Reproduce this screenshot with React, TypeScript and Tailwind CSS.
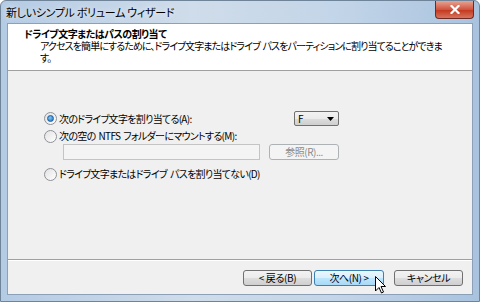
import React from "react";

const font = "font-['Noto_Sans_CJK_JP','Noto_Sans',sans-serif] [font-feature-settings:'palt']";

const Radio = ({ checked }: { checked?: boolean }) => (
  <span className="relative inline-flex h-[13px] w-[13px] shrink-0 items-center justify-center rounded-full border border-[#8f9196] bg-[linear-gradient(135deg,#e2e2e2,#ffffff)]">
    {checked && (
      <span className="h-[7px] w-[7px] rounded-full border border-[#1d5c9b] bg-[radial-gradient(circle_at_40%_35%,#7fc6f4,#1c6bb5)]" />
    )}
  </span>
);

const RadioRow = ({ checked, children }: { checked?: boolean; children: React.ReactNode }) => (
  <div className="flex h-[14px] items-center gap-[2px]">
    <Radio checked={checked} />
    <span className="whitespace-pre text-[10px] leading-[14px] tracking-[-0.7px] text-black">{children}</span>
  </div>
);

const Btn = ({ children, active }: { children: React.ReactNode; active?: boolean }) => (
  <div
    className={
      active
        ? "flex h-[16px] w-[70px] items-center justify-center whitespace-pre rounded-[3px] border border-[#3c7fb1] bg-[linear-gradient(#eaf6fd,#d9f0fc_50%,#bee6fd_51%,#a7d9f5)] text-[10px] leading-none tracking-[-0.4px] text-black"
        : "flex h-[16px] w-[69px] items-center justify-center whitespace-pre rounded-[3px] border border-[#707070] bg-[linear-gradient(#f2f2f2,#ebebeb_50%,#dddddd_51%,#cfcfcf)] text-[10px] leading-none tracking-[-0.4px] text-black"
    }
  >
    {children}
  </div>
);

const App = () => {
  return (
    <div className={`${font} relative flex h-[302px] w-[480px] flex-col overflow-hidden rounded-t-[6px] border border-[#6f8399] bg-[linear-gradient(90deg,#b4cbe4,#cfdcea_40%,#c3d5e8_70%,#a9c3df)]`}>
      {/* title bar */}
      <div className="flex h-[22px] shrink-0 items-center justify-between pl-[5px]">
        <span className="whitespace-nowrap text-[11px] leading-none tracking-[-0.3px] text-black [text-shadow:0_0_6px_#ffffff]">新しいシンプル ボリューム ウィザード</span>
        <div className="mb-[4px] mr-[5px] flex h-[18px] w-[39px] items-center justify-center self-start rounded-b-[4px] border border-t-0 border-[#6b2b27] bg-[linear-gradient(#e8a493,#d0543e_50%,#c1351c_51%,#d8735c)]">
          <svg width="10" height="9" viewBox="0 0 10 9">
            <path d="M1.5 1 L8.5 8 M8.5 1 L1.5 8" stroke="#ffffff" strokeWidth="2.2" strokeLinecap="square" />
          </svg>
        </div>
      </div>

      {/* client area */}
      <div className="mx-[6px] mb-[6px] flex flex-1 flex-col border border-[#8ca0b8] bg-[#f0f0f0]">
        <div className="h-[47px] shrink-0 border-b border-[#a0a0a0] bg-white pl-[16px] pt-[4px]">
          <div className="whitespace-nowrap text-[10px] font-bold leading-[12px] tracking-[-0.5px] text-black">ドライブ文字またはパスの割り当て</div>
          <div className="whitespace-pre pl-[16px] text-[10px] leading-[12px] tracking-[-0.9px] text-black">
            {"アクセスを簡単にするために、ドライブ文字またはドライブ  パスをパーティションに割り当てることができま"}
            <br />
            す。
          </div>
        </div>

        <div className="flex flex-1 flex-col pl-[36px] pt-[40px]">
          <div className="flex h-[15px] w-[295px] items-center justify-between">
            <RadioRow checked>次のドライブ文字を割り当てる(A):</RadioRow>
            <div className="flex h-[15px] w-[45px] items-center justify-between rounded-[2px] border border-[#707070] bg-[linear-gradient(#f2f2f2,#ebebeb_50%,#dddddd_51%,#cfcfcf)] pl-[3px] pr-[4px]">
              <span className="text-[10px] leading-none text-black">F</span>
              <svg width="7" height="4" viewBox="0 0 7 4">
                <path d="M0 0 H7 L3.5 4 Z" fill="#000000" />
              </svg>
            </div>
          </div>
          <div className="mt-[3px]">
            <RadioRow>{"次の空の  NTFS  フォルダーにマウントする(M):"}</RadioRow>
          </div>
          <div className="ml-[19px] mt-[1px] flex w-[276px] items-center justify-between">
            <div className="h-[16px] w-[197px] border border-[#c4c4c4] bg-[#f4f4f4]" />
            <div className="flex h-[16px] w-[70px] items-center justify-center rounded-[3px] border border-[#adb2b5] bg-[#f4f4f4] text-[10px] leading-none tracking-[-0.5px] text-[#8a8a8a]">
              参照(R)...
            </div>
          </div>
          <div className="mt-[7px]">
            <RadioRow>{"ドライブ文字またはドライブ  パスを割り当てない(D)"}</RadioRow>
          </div>
        </div>

        <div className="shrink-0 border-t border-[#a0a0a0] shadow-[inset_0_1px_0_#ffffff]">
          <div className="flex justify-end pb-[8px] pr-[9px] pt-[10px]">
            <div className="flex gap-[2px]">
              <Btn>{"< 戻る(B)"}</Btn>
              <Btn active>{"次へ(N) >"}</Btn>
            </div>
            <div className="ml-[10px]">
              <Btn>キャンセル</Btn>
            </div>
          </div>
        </div>
      </div>

      {/* mouse pointer */}
      <svg className="absolute left-[374px] top-[275px]" width="11" height="18" viewBox="0 0 11 18">
        <path d="M0.5 0.5 V15 L4 11.5 L6.5 17 L8.5 16 L6 10.5 H10.5 Z" fill="#ffffff" stroke="#000000" strokeWidth="1" strokeLinejoin="round" />
      </svg>
    </div>
  );
};

export default App;
